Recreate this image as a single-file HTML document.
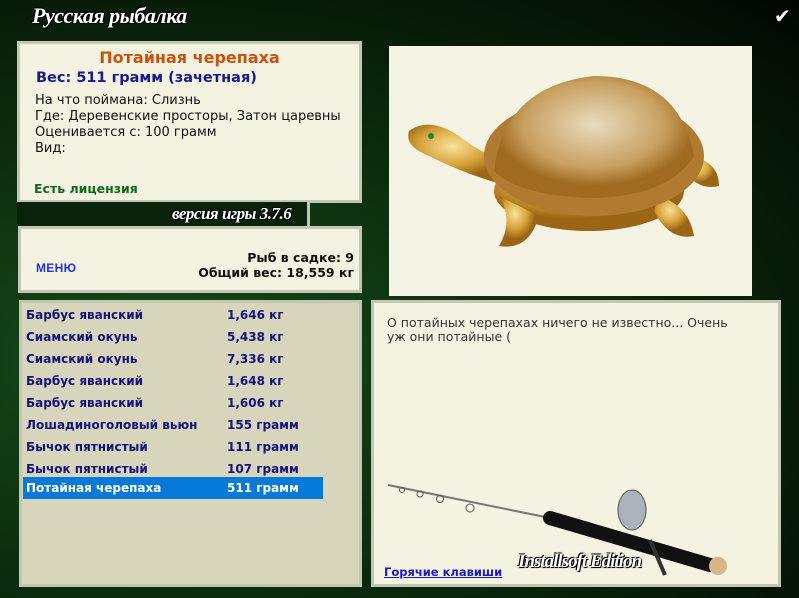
<!DOCTYPE html>
<html><head><meta charset="utf-8"><style>
*{margin:0;padding:0;box-sizing:border-box}
body{width:799px;height:598px;overflow:hidden;position:relative;font-family:"DejaVu Sans","Liberation Sans",sans-serif;font-size:12px;
background:radial-gradient(ellipse at 20% 60%,#174a17 0%,#0d300f 40%,#071a08 75%,#020602 100%);}
.p{position:absolute;background:#f4f2e1;border:3px solid #c4c6b4}
.t{position:absolute;white-space:nowrap}
.logo{position:absolute;font-family:"Liberation Serif",serif;font-style:italic;font-weight:bold;color:#fff;text-shadow:0 0 2px #000,1px 1px 0 #000,-1px -1px 0 #000}
</style></head><body>
<div class="logo" style="left:32px;top:3px;font-size:22px;letter-spacing:-0.5px">Русская рыбалка</div>
<div class="t" style="left:774px;top:4px;color:#fff;font-size:20px;font-weight:bold">✔</div>

<div class="p" style="left:17px;top:41px;width:345px;height:162px"></div>
<div class="t" style="left:17px;top:48px;width:345px;text-align:center;font-size:16px;font-weight:bold;color:#c8520e">Потайная черепаха</div>
<div class="t" style="left:36px;top:70px;font-size:14.5px;font-weight:bold;color:#161a8e">Вес: 511 грамм (зачетная)</div>
<div class="t" style="left:35px;top:93px;font-size:13px;line-height:16px;color:#111">На что поймана: Слизнь<br>Где: Деревенские просторы, Затон царевны<br>Оценивается с: 100 грамм<br>Вид:</div>
<div class="t" style="left:34px;top:181px;font-size:12.5px;font-weight:bold;color:#0e6a1e">Есть лицензия</div>
<div style="position:absolute;left:17px;top:202px;width:293px;height:26px;background:#08230a;border-right:3px solid #c4c6b4"></div>
<div class="logo" style="left:172px;top:204px;font-size:17px;letter-spacing:-0.5px">версия игры 3.7.6</div>

<div class="p" style="left:18px;top:226px;width:344px;height:67px"></div>
<div class="t" style="left:36px;top:261px;font-size:12px;color:#2233dd;font-family:'Liberation Sans',sans-serif;font-weight:900;letter-spacing:0.3px">МЕНЮ</div>
<div class="t" style="left:150px;top:250px;width:204px;text-align:right;font-size:12.5px;font-weight:bold;line-height:15px;color:#111">Рыб в садке: 9<br>Общий вес: 18,559 кг</div>

<div style="position:absolute;left:389px;top:46px;width:363px;height:250px;background:#f5f3e3">
<svg width="363" height="250" viewBox="0 0 363 250">
<defs><radialGradient id="g" cx="40%" cy="35%"><stop offset="0" stop-color="#f7e39a"/><stop offset="0.6" stop-color="#d8a23a"/><stop offset="1" stop-color="#9a6515"/></radialGradient>
<radialGradient id="s" cx="50%" cy="40%"><stop offset="0" stop-color="#e8dcc0"/><stop offset="0.7" stop-color="#c8a060"/><stop offset="1" stop-color="#a06a20"/></radialGradient></defs>
<ellipse cx="200" cy="145" rx="95" ry="40" fill="url(#g)"/>
<path d="M20 85 Q40 70 70 90 Q95 110 130 120 L120 140 Q80 130 40 110 Q15 100 20 85Z" fill="url(#g)"/>
<path d="M110 150 Q125 175 110 200 Q140 205 150 170Z" fill="url(#g)"/>
<path d="M270 150 Q300 160 305 190 Q280 195 265 165Z" fill="url(#g)"/>
<path d="M300 110 Q330 115 330 140 Q310 145 295 125Z" fill="url(#g)"/>
<ellipse cx="205" cy="110" rx="110" ry="60" fill="#b07a30"/>
<path d="M105 125 Q115 40 205 30 Q290 30 305 110 Q280 150 205 152 Q130 150 105 125Z" fill="url(#s)"/>
<circle cx="42" cy="90" r="3" fill="#1a8a3a"/>
</svg></div>

<div class="p" style="left:19px;top:300px;width:343px;height:287px;background:#d7d6bd"></div>
<div class="t" style="left:26px;top:304px;font-size:12px;font-weight:bold;line-height:22px;color:#15137a">Барбус яванский<br>Сиамский окунь<br>Сиамский окунь<br>Барбус яванский<br>Барбус яванский<br>Лошадиноголовый вьюн<br>Бычок пятнистый<br>Бычок пятнистый</div>
<div class="t" style="left:227px;top:304px;font-size:12px;font-weight:bold;line-height:22px;color:#15137a">1,646 кг<br>5,438 кг<br>7,336 кг<br>1,648 кг<br>1,606 кг<br>155 грамм<br>111 грамм<br>107 грамм</div>
<div style="position:absolute;left:23px;top:477px;width:300px;height:22px;background:#0779d8"></div>
<div class="t" style="left:26px;top:481px;font-size:12px;font-weight:bold;color:#fff">Потайная черепаха</div>
<div class="t" style="left:227px;top:481px;font-size:12px;font-weight:bold;color:#fff">511 грамм</div>

<div class="p" style="left:371px;top:300px;width:410px;height:287px"></div>
<div class="t" style="left:387px;top:316px;font-size:12.5px;line-height:14px;color:#333">О потайных черепахах ничего не известно... Очень<br>уж они потайные (</div>
<svg style="position:absolute;left:380px;top:480px" width="380" height="100" viewBox="0 0 380 100">
<line x1="8" y1="5" x2="180" y2="40" stroke="#777" stroke-width="2"/>
<circle cx="22" cy="10" r="2.5" fill="none" stroke="#555"/><circle cx="40" cy="14" r="3" fill="none" stroke="#555"/><circle cx="60" cy="19" r="3.5" fill="none" stroke="#555"/><circle cx="90" cy="28" r="4" fill="none" stroke="#555"/>
<line x1="170" y1="38" x2="330" y2="85" stroke="#111" stroke-width="14" stroke-linecap="round"/>
<circle cx="338" cy="86" r="9" fill="#d6b787"/>
<ellipse cx="252" cy="30" rx="14" ry="20" fill="#aab2bc" stroke="#555"/>
<line x1="270" y1="60" x2="285" y2="95" stroke="#333" stroke-width="4"/>
</svg>
<div class="t" style="left:384px;top:565px;font-size:11.5px;font-weight:bold;color:#1a1acc;text-decoration:underline">Горячие клавиши</div>
<div class="logo" style="left:518px;top:551px;font-size:19px;letter-spacing:-1px">Installsoft Edition</div>
</body></html>
